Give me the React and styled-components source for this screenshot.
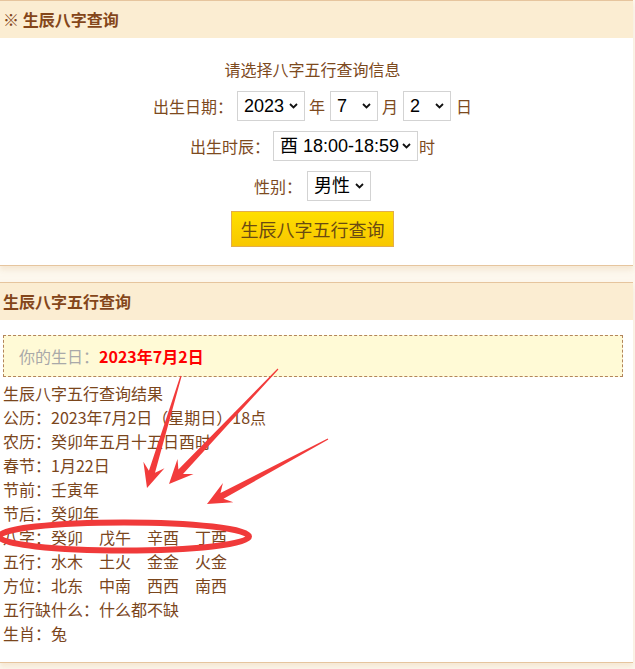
import React from 'react';
import styled, { createGlobalStyle } from 'styled-components';

const Global = createGlobalStyle`
  html, body { margin: 0; padding: 0; background: #fdf8ee; }
  body { font-family: "Noto Sans CJK SC", "Noto Sans", sans-serif; }
  * { box-sizing: border-box; }
`;

const Page = styled.div`
  position: relative;
  width: 635px;
  min-height: 669px;
`;

const Panel = styled.section`
  width: 633px;
  background: #fff;
  border-top: 1px solid #e6c59e;
  border-bottom: 1px solid #e6c59e;
  box-shadow: 0 4px 5px rgba(238, 218, 192, 0.55);
  & + & { margin-top: 16px; }
`;

const PanelHeader = styled.h2`
  margin: 0;
  height: 37px;
  line-height: 37px;
  padding-left: 3px;
  background: #fbedd2;
  color: #84461a;
  font-size: 16px;
  font-weight: bold;
`;

const FormBody = styled.div`
  display: flex;
  flex-direction: column;
  align-items: center;
  gap: 10px;
  padding: 19px 8px 18px 0;
`;

const Intro = styled.div`
  font-size: 16px;
  line-height: 24px;
  color: #7d4a1e;
`;

const FormRow = styled.div`
  display: flex;
  align-items: center;
  height: 30px;
  font-size: 16px;
  color: #7d4a1e;
`;

const Label = styled.span`
  margin-right: ${p => p.$gap || 4}px;
`;

const Unit = styled.span`
  margin: 0 ${p => p.$after ?? 5}px 0 ${p => p.$before ?? 4}px;
`;

const SelectWrap = styled.span`
  position: relative;
  display: inline-flex;
  width: ${p => p.$w}px;
  height: 30px;
`;

const NativeSelect = styled.select`
  appearance: none;
  -webkit-appearance: none;
  width: 100%;
  height: 30px;
  margin: 0;
  padding: 0 18px 0 6px;
  border: 1px solid #d3d3d3;
  border-radius: 0;
  background: #fff;
  color: #000;
  font-family: "Liberation Sans", "Noto Sans CJK SC", sans-serif;
  font-size: 18px;
  outline: none;
`;

const Chevron = styled.svg`
  position: absolute;
  right: 7px;
  top: 12px;
  pointer-events: none;
`;

const SubmitButton = styled.button`
  width: 163px;
  height: 36px;
  padding: 0;
  border: 1px solid #e3ad4c;
  background: linear-gradient(#ffdf00, #f8c700);
  color: #6a4a12;
  font-family: "Noto Sans CJK SC", sans-serif;
  font-size: 18px;
  cursor: pointer;
`;

const ResultBody = styled.div`
  padding: 15px 10px 17px 3px;
`;

const BirthBox = styled.div`
  height: 42px;
  line-height: 40px;
  padding-left: 15px;
  border: 1px dashed #b3855a;
  background: #fffad6;
  font-size: 16px;
  color: #a9a9a9;
`;

const BirthValue = styled.strong`
  color: #ff0000;
  font-weight: bold;
`;

const ResultList = styled.ul`
  list-style: none;
  margin: 4px 0 0;
  padding: 0;
  font-size: 16px;
  line-height: 24px;
  color: #7b461c;
`;

const Overlay = styled.svg`
  position: absolute;
  left: 0;
  top: 0;
  pointer-events: none;
`;

function Select({ w, value, options }) {
  return (
    <SelectWrap $w={w}>
      <NativeSelect defaultValue={value}>
        {options.map(o => <option key={o} value={o}>{o}</option>)}
      </NativeSelect>
      <Chevron width="9" height="6" viewBox="0 0 9 6">
        <path d="M1 1 L4.5 4.5 L8 1" fill="none" stroke="#111" strokeWidth="1.8" />
      </Chevron>
    </SelectWrap>
  );
}

function arrowPoints(tail, tip) {
  const [tx, ty] = tail;
  const [hx, hy] = tip;
  const dx = hx - tx, dy = hy - ty;
  const L = Math.hypot(dx, dy);
  const ux = dx / L, uy = dy / L;
  const nx = -uy, ny = ux;
  const at = (d, w) => `${(hx - ux * d + nx * w).toFixed(1)},${(hy - uy * d + ny * w).toFixed(1)}`;
  const tailPt = w => `${(tx + nx * w).toFixed(1)},${(ty + ny * w).toFixed(1)}`;
  return [
    tailPt(0.6), at(17, 3.2), at(24, 11), `${hx},${hy}`, at(24, -11), at(17, -3.2), tailPt(-0.6)
  ].join(' ');
}

const arrows = [
  [[181, 376], [147, 488]],
  [[278, 369], [169, 484]],
  [[328, 439], [207, 504]],
];

const years = ['2021', '2022', '2023', '2024'];
const months = Array.from({ length: 12 }, (_, i) => String(i + 1));
const days = Array.from({ length: 31 }, (_, i) => String(i + 1));
const hours = ['申 16:00-16:59', '酉 18:00-18:59', '戌 20:00-20:59'];

const results = [
  '生辰八字五行查询结果',
  '公历：2023年7月2日（星期日）18点',
  '农历：癸卯年五月十五日酉时',
  '春节：1月22日',
  '节前：壬寅年',
  '节后：癸卯年',
  '八字：癸卯　戊午　辛酉　丁酉',
  '五行：水木　土火　金金　火金',
  '方位：北东　中南　西西　南西',
  '五行缺什么：什么都不缺',
  '生肖：兔',
];

export default function App() {
  return (
    <Page>
      <Global />
      <Panel>
        <PanelHeader>※ 生辰八字查询</PanelHeader>
        <FormBody>
          <Intro>请选择八字五行查询信息</Intro>
          <FormRow>
            <Label>出生日期：</Label>
            <Select w={68} value="2023" options={years} />
            <Unit>年</Unit>
            <Select w={48} value="7" options={months} />
            <Unit>月</Unit>
            <Select w={48} value="2" options={days} />
            <Unit $before={5} $after={0}>日</Unit>
          </FormRow>
          <FormRow>
            <Label $gap={3}>出生时辰：</Label>
            <Select w={145} value="酉 18:00-18:59" options={hours} />
            <Unit $before={1} $after={0}>时</Unit>
          </FormRow>
          <FormRow>
            <Label $gap={5}>性别：</Label>
            <Select w={64} value="男性" options={['男性', '女性']} />
          </FormRow>
          <SubmitButton type="button">生辰八字五行查询</SubmitButton>
        </FormBody>
      </Panel>
      <Panel>
        <PanelHeader>生辰八字五行查询</PanelHeader>
        <ResultBody>
          <BirthBox>
            你的生日：<BirthValue>2023年7月2日</BirthValue>
          </BirthBox>
          <ResultList>
            {results.map(r => <li key={r}>{r}</li>)}
          </ResultList>
        </ResultBody>
      </Panel>
      <Overlay width="635" height="669" viewBox="0 0 635 669">
        <ellipse cx="124" cy="536.5" rx="125" ry="14" fill="none" stroke="#f03a3a" strokeWidth="6" />
        {arrows.map(([t, h], i) => (
          <polygon key={i} points={arrowPoints(t, h)} fill="#f23b3b" />
        ))}
      </Overlay>
    </Page>
  );
}
